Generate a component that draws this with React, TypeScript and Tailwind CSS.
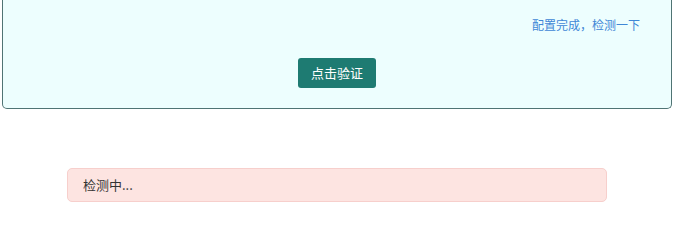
import React from "react";

export default function App() {
  return (
    <div
      className="w-[697px] h-[223px] bg-white overflow-hidden"
      style={{ fontFamily: '"Noto Sans CJK SC", "Noto Sans", sans-serif' }}
    >
      <div className="ml-[2px] w-[670px] h-[109px] bg-[#edfefe] border-x border-b border-[#4f7474] rounded-b-[5px] flex flex-col">
        <div className="flex justify-end pr-[31px] pt-[16px] h-[18px] box-content">
          <span className="text-[12px] leading-[18px] text-[#3f87d6] cursor-pointer">
            配置完成，检测一下
          </span>
        </div>
        <div className="flex justify-center pt-[24px]">
          <button className="w-[78px] h-[30px] rounded-[3px] bg-[#1e7b72] text-white text-[13px] leading-[30px]">
            点击验证
          </button>
        </div>
      </div>
      <div className="mt-[59px] ml-[67px] w-[540px] h-[34px] bg-[#fde4e1] border border-[#f7cfcc] rounded-[5px] flex items-center pl-[15px]">
        <span className="text-[13px] text-[#333]">检测中...</span>
      </div>
    </div>
  );
}
